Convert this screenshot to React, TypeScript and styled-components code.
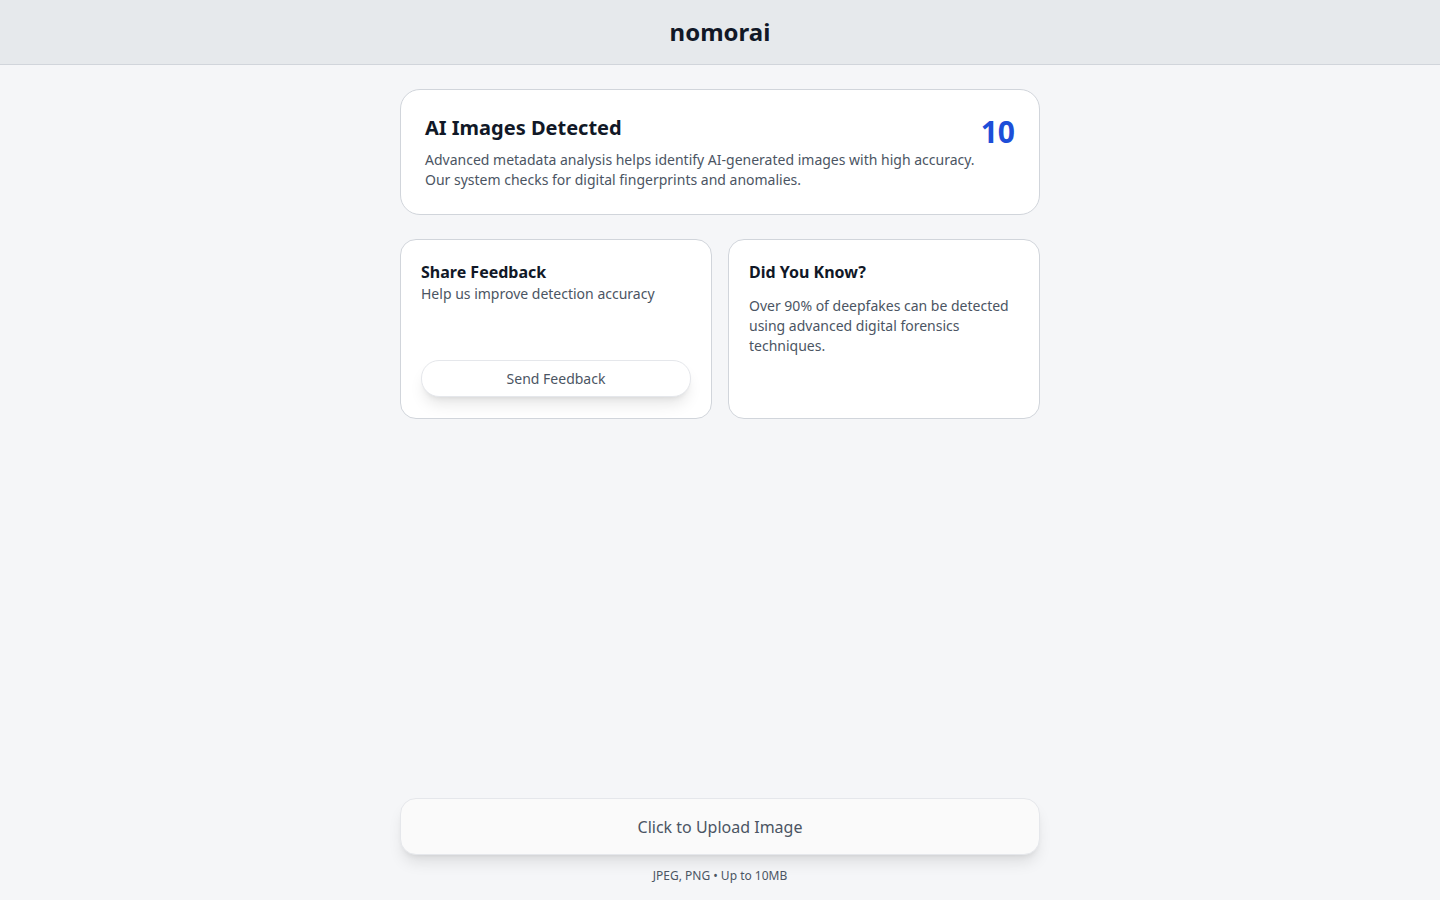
import React from 'react';
import styled, { createGlobalStyle } from 'styled-components';

const GlobalStyle = createGlobalStyle`
  * { box-sizing: border-box; }
  body {
    margin: 0;
    font-family: 'Noto Sans', 'Open Sans', sans-serif;
    background: #f5f6f8;
    color: #111827;
  }
`;

const Page = styled.div`
  min-height: 100vh;
  display: flex;
  flex-direction: column;
`;

const Header = styled.header`
  height: 65px;
  padding-bottom: 2px;
  background: #e6e9ec;
  border-bottom: 1px solid #d1d5db;
  display: flex;
  align-items: center;
  justify-content: center;
`;

const Logo = styled.h1`
  margin: 0;
  font-size: 24px;
  font-weight: 700;
  color: #111827;
`;

const Main = styled.main`
  flex: 1;
  width: 640px;
  margin: 0 auto;
  padding-top: 24px;
  display: flex;
  flex-direction: column;
  gap: 24px;
`;

const StatCard = styled.section`
  background: #fff;
  border: 1px solid #d1d5db;
  border-radius: 20px;
  padding: 24px;
  display: flex;
  justify-content: space-between;
  align-items: flex-start;
`;

const StatTitle = styled.h2`
  margin: 0 0 8px;
  font-size: 20px;
  line-height: 28px;
  font-weight: 700;
  color: #111827;
`;

const Text = styled.p<{ $gap?: number }>`
  margin: ${(p) => p.$gap ?? 0}px 0 0;
  font-size: 14px;
  line-height: 20px;
  color: #4b5563;
`;

const StatNumber = styled.span`
  font-size: 30px;
  line-height: 36px;
  font-weight: 700;
  color: #1d4ed8;
`;

const Grid = styled.div`
  display: grid;
  grid-template-columns: 1fr 1fr;
  gap: 16px;
`;

const Card = styled.section`
  background: #fff;
  border: 1px solid #d1d5db;
  border-radius: 16px;
  padding: 20px 20px 21px;
  height: 180px;
  display: flex;
  flex-direction: column;
`;

const CardTitle = styled.h3`
  margin: 0;
  font-size: 16px;
  line-height: 24px;
  font-weight: 700;
  color: #111827;
`;

const FeedbackButton = styled.button`
  margin-top: auto;
  height: 37px;
  border: 1px solid #e5e7eb;
  border-radius: 18px;
  background: #fff;
  font-family: inherit;
  font-size: 14px;
  color: #4b5563;
  box-shadow: 0 10px 15px -3px rgba(0, 0, 0, 0.1), 0 4px 6px -4px rgba(0, 0, 0, 0.1);
  cursor: pointer;
`;

const Footer = styled.footer`
  width: 640px;
  margin: 0 auto;
  padding-bottom: 16px;
  display: flex;
  flex-direction: column;
  align-items: center;
  gap: 13px;
`;

const UploadButton = styled.button`
  width: 100%;
  height: 57px;
  background: #fafafa;
  border: 1px solid #e5e7eb;
  border-radius: 16px;
  font-family: inherit;
  font-size: 16px;
  color: #4b5563;
  box-shadow: 0 10px 15px -3px rgba(0, 0, 0, 0.1), 0 4px 6px -4px rgba(0, 0, 0, 0.1);
  cursor: pointer;
`;

const Hint = styled.span`
  font-size: 12px;
  line-height: 16px;
  color: #4b5563;
`;

export default function App() {
  return (
    <>
      <GlobalStyle />
      <Page>
        <Header>
          <Logo>nomorai</Logo>
        </Header>
        <Main>
          <StatCard>
            <div>
              <StatTitle>AI Images Detected</StatTitle>
              <Text>
                Advanced metadata analysis helps identify AI-generated images with high accuracy.
                <br />
                Our system checks for digital fingerprints and anomalies.
              </Text>
            </div>
            <StatNumber>10</StatNumber>
          </StatCard>
          <Grid>
            <Card>
              <CardTitle>Share Feedback</CardTitle>
              <Text>Help us improve detection accuracy</Text>
              <FeedbackButton>Send Feedback</FeedbackButton>
            </Card>
            <Card>
              <CardTitle>Did You Know?</CardTitle>
              <Text $gap={12}>
                Over 90% of deepfakes can be detected using advanced digital forensics techniques.
              </Text>
            </Card>
          </Grid>
        </Main>
        <Footer>
          <UploadButton>Click to Upload Image</UploadButton>
          <Hint>JPEG, PNG • Up to 10MB</Hint>
        </Footer>
      </Page>
    </>
  );
}
